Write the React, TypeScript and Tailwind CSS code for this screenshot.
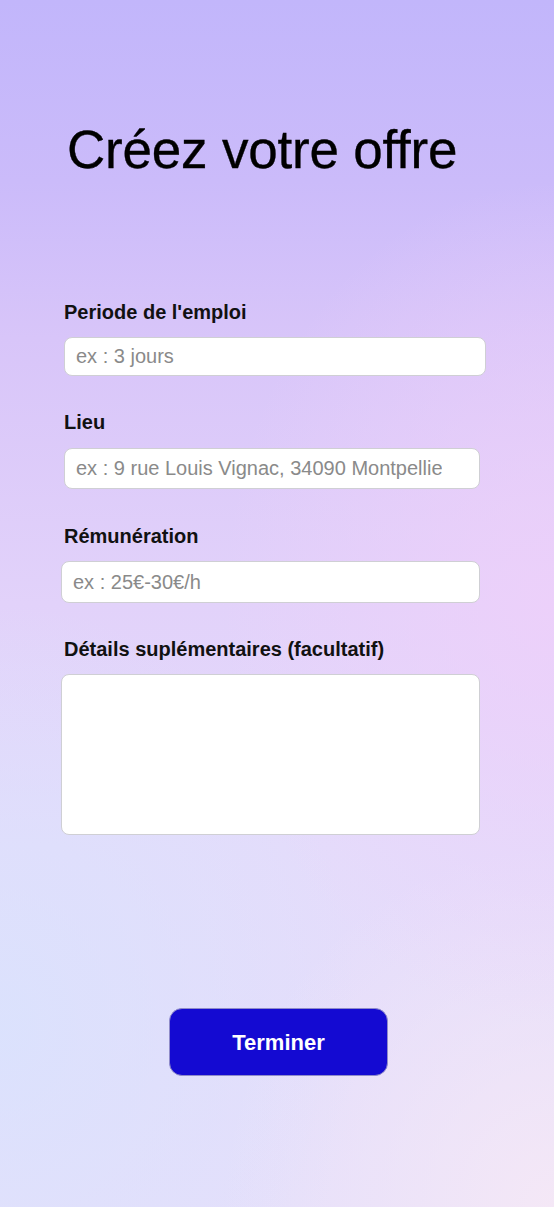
import React from "react";

export default function App() {
  const font = "font-['Liberation_Sans',Arial,sans-serif]";
  return (
    <div
      className={`min-h-[1207px] w-full ${font} bg-[radial-gradient(ellipse_60%_35%_at_100%_50%,rgba(238,208,250,0.85),rgba(238,208,250,0)),radial-gradient(ellipse_65%_35%_at_0%_85%,rgba(218,226,253,0.9),rgba(218,226,253,0)),radial-gradient(ellipse_60%_30%_at_100%_100%,rgba(245,232,246,0.95),rgba(245,232,246,0)),linear-gradient(180deg,#c2b6fb_0%,#cbbbfa_15%,#d8c5f9_28%,#e2d2fa_50%,#e4dcfb_70%,#e5dffb_100%)] flex flex-col`}
    >
      <h1 className="mt-[123px] pl-[67px] text-[53px] leading-[53px] font-normal text-black tracking-[-0.2px] [-webkit-text-stroke:0.35px_black]">
        Créez votre offre
      </h1>

      <div className="flex flex-col pl-[61px] mt-[126px]">
        <label className="ml-[3px] text-[20px] leading-[20px] font-bold text-[#111]">
          Periode de l'emploi
        </label>
        <input
          placeholder="ex : 3 jours"
          className="ml-[3px] mt-[15px] w-[422px] h-[39px] rounded-[8px] border border-[#cfcfd4] bg-white px-[11px] text-[20px] text-black placeholder:text-[#8a8a8a] outline-none"
        />

        <label className="ml-[3px] mt-[36px] text-[20px] leading-[20px] font-bold text-[#111]">
          Lieu
        </label>
        <input
          placeholder="ex : 9 rue Louis Vignac, 34090 Montpellier"
          className="ml-[3px] mt-[16px] w-[416px] h-[41px] rounded-[8px] border border-[#cfcfd4] bg-white pl-[11px] pr-[37px] text-[20px] text-black placeholder:text-[#8a8a8a] outline-none"
        />

        <label className="ml-[3px] mt-[37px] text-[20px] leading-[20px] font-bold text-[#111]">
          Rémunération
        </label>
        <input
          placeholder="ex : 25€-30€/h"
          className="mt-[15px] w-[419px] h-[42px] rounded-[8px] border border-[#cfcfd4] bg-white px-[11px] text-[20px] text-black placeholder:text-[#8a8a8a] outline-none"
        />

        <label className="ml-[3px] mt-[36px] text-[20px] leading-[20px] font-bold text-[#111]">
          Détails suplémentaires (facultatif)
        </label>
        <textarea className="mt-[15px] w-[419px] h-[161px] rounded-[8px] border border-[#cfcfd4] bg-white px-[11px] py-[8px] text-[20px] text-black outline-none resize-none" />
      </div>

      <div className="mt-[173px] pl-[169px] pb-[131px]">
        <button className="w-[219px] h-[68px] rounded-[13px] border border-[#8f8bc9] bg-[#140ad2] text-white text-[22px] font-bold">
          Terminer
        </button>
      </div>
    </div>
  );
}
